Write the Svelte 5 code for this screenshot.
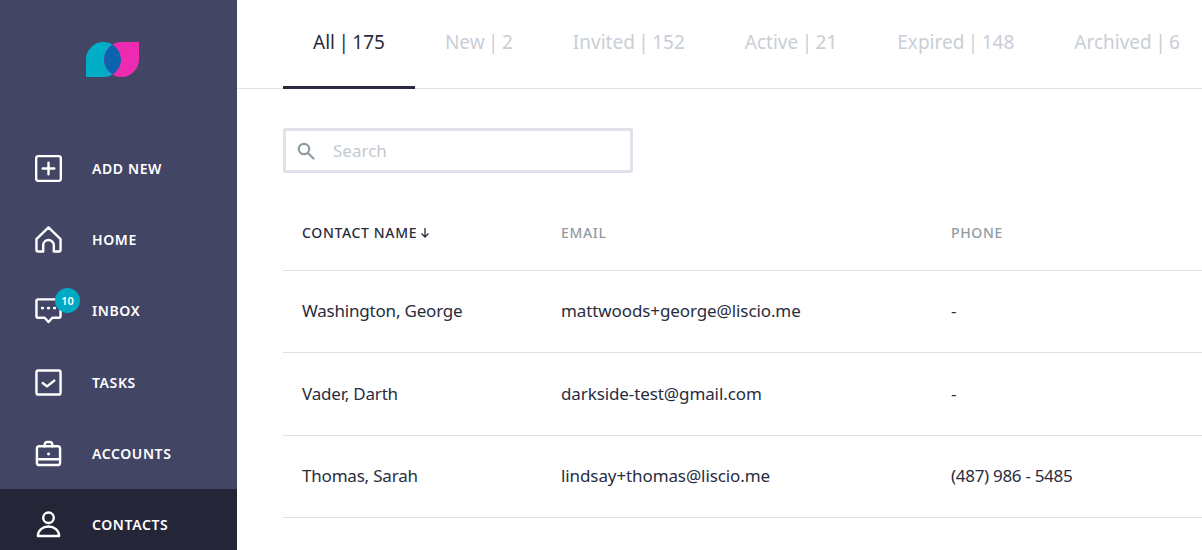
<script>
  const tabs = [
    ['All', 175, true], ['New', 2], ['Invited', 152], ['Active', 21], ['Expired', 148], ['Archived', 6]
  ];
  const rows = [
    ['Washington, George', 'mattwoods+george@liscio.me', '-'],
    ['Vader, Darth', 'darkside-test@gmail.com', '-'],
    ['Thomas, Sarah', 'lindsay+thomas@liscio.me', '(487) 986 - 5485']
  ];
</script>

<div class="page">
  <aside class="side">
    <div class="logo">
      <svg width="53" height="35" viewBox="0 0 53 35">
        <path fill="#00aec8" d="M0 35V17.5A17.5 17.5 0 1 1 17.5 35Z" />
        <path fill="#ee2bb0" d="M53 0V17.5A17.5 17.5 0 1 1 35.5 0Z" />
        <path fill="#0b63ad" d="M26.5 2.5A17.5 17.5 0 0 1 26.5 32.5A17.5 17.5 0 0 1 26.5 2.5Z" />
      </svg>
    </div>
    <nav class="nav">
      <a class="item">
        <svg class="icon" viewBox="0 0 28 28"><rect x="1.200" y="1.200" width="25.600" height="25.600" rx="2.500" /><path d="M14 8v12M8 14h12" /></svg>
        <span>ADD NEW</span>
      </a>
      <a class="item">
        <svg class="icon" viewBox="0 0 28 28"><path d="M14 1.500 26.500 13.500V25a1.500 1.500 0 0 1-1.500 1.500H19.500V20a5.500 5.500 0 0 0-11 0v6.500H3A1.500 1.500 0 0 1 1.500 25V13.500Z" /></svg>
        <span>HOME</span>
      </a>
      <a class="item">
        <svg class="icon" viewBox="0 0 28 28"><path d="M3 2.500H25A1.500 1.500 0 0 1 26.500 4V20A1.500 1.500 0 0 1 25 21.500H18L14 26 10 21.500H3A1.500 1.500 0 0 1 1.500 20V4A1.500 1.500 0 0 1 3 2.500Z" /><path class="dots" d="M7.500 11.500h.5M13.750 11.500h.5M20 11.500h.5" /></svg>
        <b class="badge">10</b>
        <span>INBOX</span>
      </a>
      <a class="item">
        <svg class="icon" viewBox="0 0 28 28"><rect x="1.500" y="1.500" width="25" height="25" rx="2" /><path d="M8 14.500 12.500 18 20 12" /></svg>
        <span>TASKS</span>
      </a>
      <a class="item">
        <svg class="icon" viewBox="0 0 28 28"><rect x="2" y="6.500" width="24" height="19.500" rx="2.500" /><path d="M10 6.500V4.500A3 3 0 0 1 13 2H15A3 3 0 0 1 18 4.500V6.500M2 20H26" /><path class="dots" d="M14 14.500h.1" /></svg>
        <span>ACCOUNTS</span>
      </a>
      <a class="item active">
        <svg class="icon" viewBox="0 0 28 28"><circle cx="14" cy="7" r="5.500" /><path d="M3 26C3 20 8 16 14 16S25 20 25 26Z" /></svg>
        <span>CONTACTS</span>
      </a>
    </nav>
  </aside>

  <main class="main">
    <div class="tabs">
      {#each tabs as [name, count, on]}
        <div class="tab" class:on>{name} | {count}</div>
      {/each}
    </div>
    <div class="content">
      <label class="search">
        <svg width="18" height="18" viewBox="0 0 18 18"><circle cx="7" cy="7" r="5.200" /><path d="M11 11l5.500 5.500" /></svg>
        <span>Search</span>
      </label>
      <div class="grid head">
        <div class="sorted">CONTACT NAME<svg width="10" height="11" viewBox="0 0 10 11"><path d="M5 1v9M1.500 6.500 5 10l3.500-3.500" /></svg></div>
        <div>EMAIL</div>
        <div>PHONE</div>
      </div>
      {#each rows as r}
        <div class="grid row">
          <div class="c1">{r[0]}</div>
          <div class="c2">{r[1]}</div>
          <div class="c3">{r[2]}</div>
        </div>
      {/each}
    </div>
  </main>
</div>

<style>
  :global(body) { margin: 0; background: #fff; overflow: hidden; }
  .page {
    display: flex; width: 1202px; height: 550px; overflow: hidden;
    font-family: "Noto Sans", "Open Sans", sans-serif; color: #282c3e;
  }
  .side { flex: 0 0 237px; background: #434565; display: flex; flex-direction: column; }
  .logo { padding: 42px 0 0 86px; height: 133px; flex: none; box-sizing: border-box; }
  .logo svg { display: block; }
  .nav { display: flex; flex-direction: column; }
  .item {
    position: relative; height: 71.200px; flex: none; display: flex; align-items: center;
    padding-left: 35px; gap: 30px; color: #fff;
    font-size: 14px; font-weight: 600; letter-spacing: 0.600px;
  }
  .active { background: #252538; }
  .icon { width: 27px; height: 27px; fill: none; stroke: #fff; stroke-width: 2.500; stroke-linejoin: round; stroke-linecap: round; }
  .dots { stroke-width: 3; }
  .badge {
    position: absolute; left: 55px; top: 13px; width: 25px; height: 25px; border-radius: 50%;
    background: #00a9c4; color: #fff; font-size: 11px; font-weight: 600; letter-spacing: 0;
    display: flex; align-items: center; justify-content: center;
  }
  .main { flex: 1; min-width: 0; }
  .tabs {
    height: 89px; box-sizing: border-box; border-bottom: 1px solid #e1e3ea; padding-left: 46px;
    display: flex; white-space: nowrap;
  }
  .tab {
    padding: 0 30px; height: 89px; box-sizing: border-box; line-height: 84px;
    font-size: 19px; word-spacing: -1.500px; color: #c9ced6; flex: none;
  }
  .tab.on { color: #282c3e; border-bottom: 3px solid #282c3e; }
  .content { padding: 39px 0 0 46px; }
  .search {
    width: 350px; height: 45px; box-sizing: border-box; border: 3px solid #e0e2ea; border-radius: 2px;
    display: flex; align-items: center; padding-left: 11px; gap: 18px; color: #c4c9d0; font-size: 17px;
  }
  .search svg { fill: none; stroke: #8f9ba3; stroke-width: 2.200; stroke-linecap: round; }
  .grid {
    display: grid; grid-template-columns: 259px 390px 1fr; padding-left: 19px; align-items: center;
    border-bottom: 1px solid #dfe1e6;
  }
  .head {
    height: 98px; padding-top: 22px; box-sizing: border-box;
    font-size: 14px; font-weight: 500; letter-spacing: 0.650px; color: #8f9ba3;
  }
  .sorted { color: #282c3e; display: flex; align-items: center; gap: 3px; }
  .sorted svg { fill: none; stroke: #282c3e; stroke-width: 1.300; }
  .row { height: 82.400px; padding-bottom: 2px; box-sizing: border-box; font-size: 17px; }
  .c1 { letter-spacing: -0.200px; }
  .c2 { letter-spacing: -0.100px; }
  .c3 { letter-spacing: -0.300px; }
</style>
